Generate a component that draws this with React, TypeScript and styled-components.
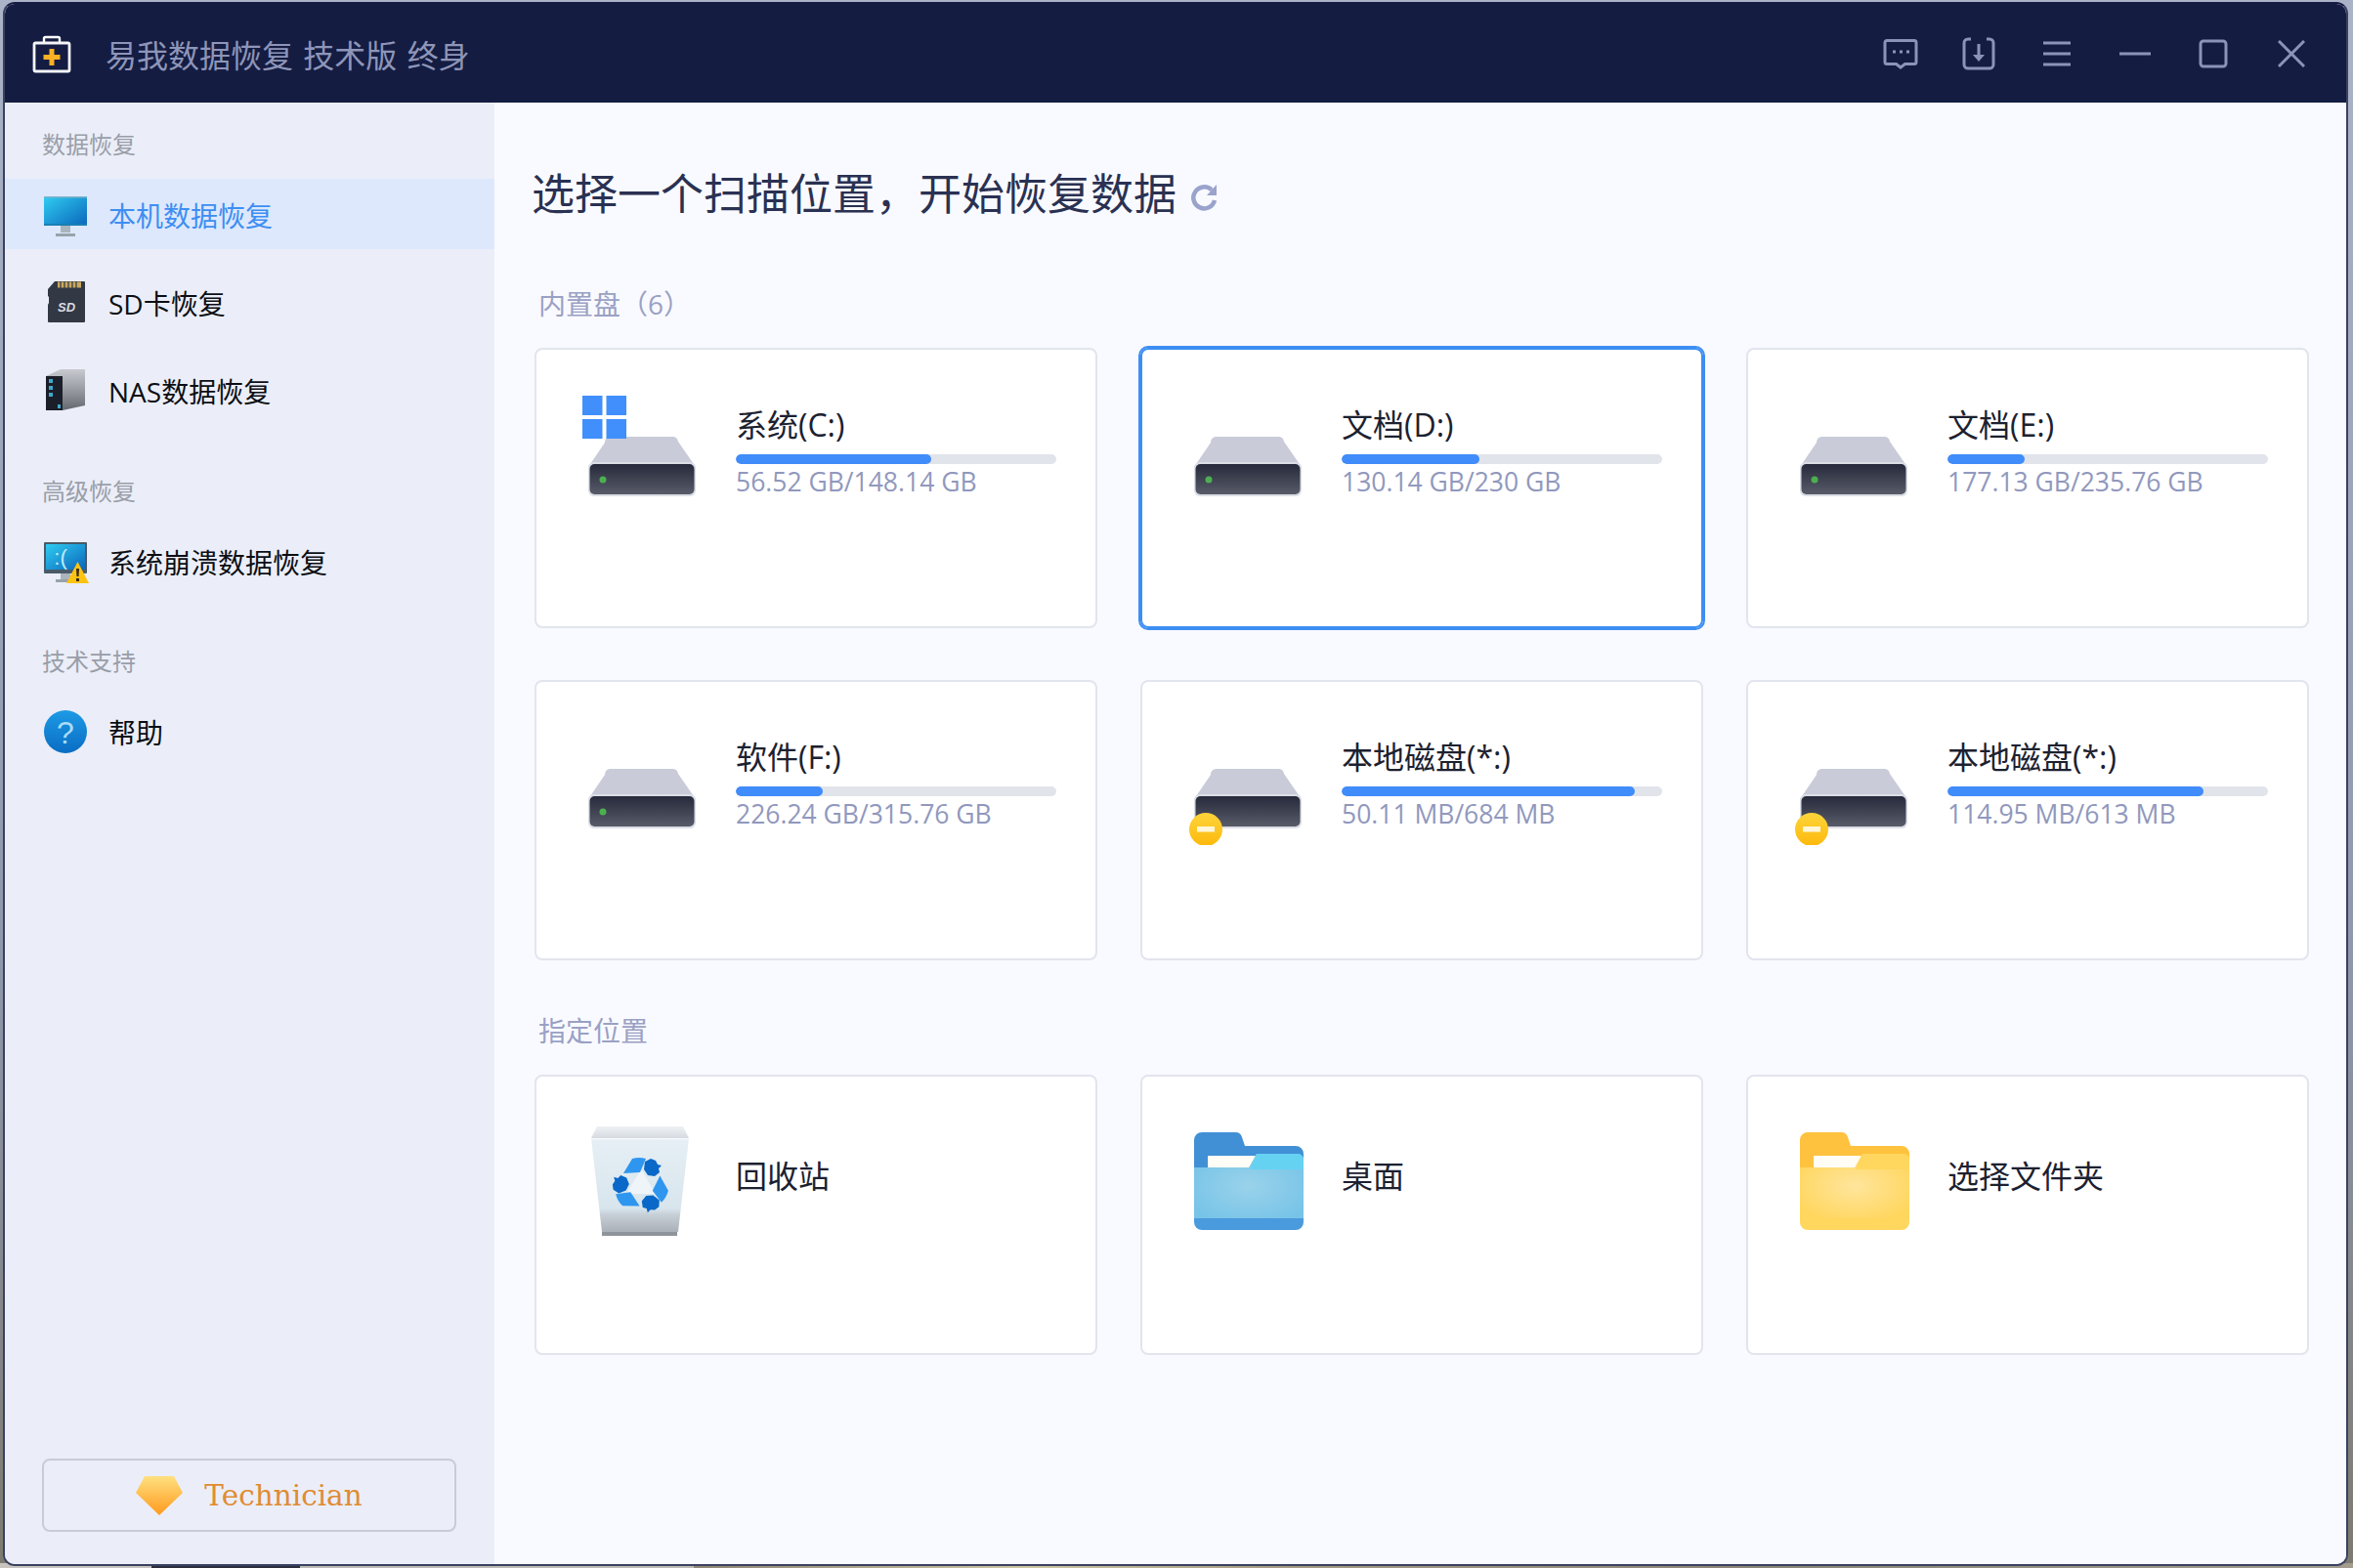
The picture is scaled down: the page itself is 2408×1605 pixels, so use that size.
import React from "react";
import styled, { createGlobalStyle } from "styled-components";

const FONT = `"Open Sans", "Noto Sans CJK SC", sans-serif`;

const GlobalStyle = createGlobalStyle`
  html, body {
    margin: 0;
    padding: 0;
    width: 2408px;
    height: 1605px;
    overflow: hidden;
    font-family: ${FONT};
    background:
      linear-gradient(90deg, #c8c5c0 0, #c8c5c0 155px, #2c2e3e 155px, #2c2e3e 307px, #bdbbb6 307px, #bdbbb6 710px, #8f8574 710px, #cfc7a4 1050px, #a89c84 1300px, #8b8578 1800px, #a39d90 2408px) bottom / 100% 5px no-repeat,
      linear-gradient(180deg, #aab3c7 0%, #8f98ad 60%, #7d7a70 100%);
  }
  * { box-sizing: border-box; }
`;

const Window = styled.div`
  width: 2400px;
  height: 1601px;
  margin: 2px 0 0 3px;
  border: 2px solid #3a4160;
  border-top-color: #141c42;
  border-radius: 12px;
  overflow: hidden;
  display: flex;
  flex-direction: column;
  background: #f9faff;
`;

const TitleBar = styled.header`
  height: 101px;
  flex: none;
  display: flex;
  align-items: center;
  padding: 0 16px 0 27px;
  background: #141c42;
`;

const AppTitle = styled.h1`
  margin: 0 0 0 34px;
  flex: 1;
  font-size: 32px;
  font-weight: 400;
  word-spacing: 2px;
  color: #8e95b8;
  white-space: pre;
`;

const WinButton = styled.button`
  width: 80px;
  height: 80px;
  padding: 0;
  border: 0;
  background: none;
  display: flex;
  align-items: center;
  justify-content: center;
  color: #8b93b8;
`;

const Body = styled.div`
  flex: 1;
  display: flex;
  min-height: 0;
`;

const Sidebar = styled.nav`
  width: 501px;
  flex: none;
  display: flex;
  flex-direction: column;
  padding: 25px 0 33px;
  background: #ebeef8;
`;

const NavGroup = styled.div`
  display: flex;
  flex-direction: column;
  gap: 18px;
  & + & {
    margin-top: 49.5px;
  }
`;

const NavLabel = styled.div`
  height: 35px;
  line-height: 36px;
  padding-left: 38px;
  font-size: 24px;
  color: #9a9ea9;
`;

const NavRow = styled.div<{ $active?: boolean }>`
  height: 72px;
  display: flex;
  align-items: center;
  gap: 19px;
  padding: 2px 0 0 39px;
  font-size: 28px;
  color: ${(p) => (p.$active ? "#3d8ef2" : "#0c0e14")};
  background: ${(p) => (p.$active ? "#dde8fd" : "transparent")};
`;

const TierButton = styled.div`
  margin: auto 0 0 38px;
  width: 424px;
  height: 75px;
  display: flex;
  align-items: center;
  justify-content: center;
  gap: 22px;
  border: 2px solid #c8ccd6;
  border-radius: 8px;
  font-family: "DejaVu Serif", serif;
  font-size: 29.5px;
  color: #e08c32;
`;

const Main = styled.main`
  flex: 1;
  padding: 59px 39px 0 41px;
  background: #f9faff;
`;

const Heading = styled.div`
  display: flex;
  align-items: center;
  gap: 14px;
  height: 64px;
  margin-left: -3px;
  font-size: 44px;
  color: #2a3152;
`;

const RefreshGlyph = styled.svg`
  width: 28px;
  height: 28px;
  margin-top: 12px;
`;

const Section = styled.section`
  margin-top: 63px;
  & + & {
    margin-top: 51.5px;
  }
`;

const SectionLabel = styled.div`
  height: 40px;
  line-height: 40px;
  margin-left: 4px;
  font-size: 28px;
  color: #9aa1c4;
`;

const CardGrid = styled.div`
  margin-top: 25px;
  display: grid;
  grid-template-columns: repeat(3, 576px);
  column-gap: 44px;
  row-gap: 53px;
`;

const Card = styled.div<{ $selected?: boolean }>`
  height: 287px;
  display: flex;
  align-items: flex-start;
  gap: 36px;
  padding: 47px 0 0 44px;
  background: #fff;
  border: 2px solid ${(p) => (p.$selected ? "#3d8ef2" : "#e2e4ee")};
  border-radius: 8px;
  outline: ${(p) => (p.$selected ? "2px solid #3d8ef2" : "none")};
`;

const CardIcon = styled.svg`
  width: 124px;
  height: 120px;
  flex: none;
`;

const CardInfo = styled.div`
  width: 328px;
  margin-top: 10px;
`;

const CardName = styled.div`
  height: 40px;
  line-height: 40px;
  font-size: 32px;
  color: #1c2130;
`;

const Track = styled.div`
  height: 10px;
  margin-top: 10px;
  border-radius: 5px;
  overflow: hidden;
  background: #e1e4ea;
`;

const Fill = styled.div`
  height: 100%;
  border-radius: 5px;
  background: #408cfa;
`;

const Usage = styled.div`
  height: 36px;
  line-height: 36px;
  font-size: 26.5px;
  color: #9198bd;
  white-space: nowrap;
`;

const PlainName = styled(CardName)`
  margin-top: 35px;
`;

const AppIcon = () => (
  <svg width="42" height="42" viewBox="0 0 42 42">
    <path d="M13 10V5.500A1.500 1.500 0 0 1 14.500 4h13A1.500 1.500 0 0 1 29 5.500V10" fill="none" stroke="#fff" strokeWidth="2.4" />
    <rect x="3" y="10" width="36" height="29" rx="1.500" fill="#141c42" stroke="#f4f5f8" strokeWidth="2.8" />
    <path d="M18.500 16h5v6h6v5h-6v6h-5v-6h-6v-5h6z" fill="#fbb024" />
  </svg>
);

const FeedbackIcon = () => (
  <svg width="36" height="32" viewBox="0 0 36 32" fill="none" stroke="currentColor" strokeWidth="3">
    <path d="M4 2.500h28a2 2 0 0 1 2 2v20a2 2 0 0 1-2 2h-9.500L18 30l-4.500-3.500H4a2 2 0 0 1-2-2v-20a2 2 0 0 1 2-2z" />
    <path d="M10 14h3M17 14h3M24 14h3" strokeWidth="3.2" />
  </svg>
);

const ImportIcon = () => (
  <svg width="34" height="34" viewBox="0 0 34 34" fill="none" stroke="currentColor" strokeWidth="3">
    <path d="M9 2H6a4 4 0 0 0-4 4v22a4 4 0 0 0 4 4h22a4 4 0 0 0 4-4V6a4 4 0 0 0-4-4h-3" />
    <path d="M17 7v13" />
    <path d="M11 18h12l-6 7z" fill="currentColor" stroke="none" />
  </svg>
);

const MenuIcon = () => (
  <svg width="30" height="26" viewBox="0 0 30 26" stroke="currentColor" strokeWidth="3">
    <path d="M1 2h28M1 13h28M1 24h28" />
  </svg>
);

const MinIcon = () => (
  <svg width="32" height="4" viewBox="0 0 32 4" stroke="currentColor" strokeWidth="3">
    <path d="M0 2h32" />
  </svg>
);

const MaxIcon = () => (
  <svg width="30" height="30" viewBox="0 0 30 30" fill="none" stroke="currentColor" strokeWidth="3">
    <rect x="2" y="2" width="26" height="26" rx="3" />
  </svg>
);

const CloseIcon = () => (
  <svg width="28" height="28" viewBox="0 0 28 28" stroke="currentColor" strokeWidth="3">
    <path d="M1 1l26 26M27 1L1 27" />
  </svg>
);

const ScreenGradient = ({ id }: { id: string }) => (
  <defs>
    <linearGradient id={id} x1="0" y1="0" x2="1" y2="1">
      <stop offset="0" stopColor="#30cdf2" />
      <stop offset="1" stopColor="#0a66bb" />
    </linearGradient>
  </defs>
);

const MonitorIcon = () => (
  <svg width="48" height="48" viewBox="0 0 48 48">
    <ScreenGradient id="screenA" />
    <path d="M18 35h10v7H18z" fill="#aab4bc" />
    <path d="M13 43h20v3H13z" fill="#98a2aa" />
    <rect x="1" y="5" width="44" height="30" rx="1" fill="url(#screenA)" />
    <path d="M1 5h44v1.500H1z" fill="#7fb2c8" />
    <path d="M1 33h44v2H1z" fill="#1a7fb4" />
  </svg>
);

const SdIcon = () => (
  <svg width="48" height="48" viewBox="0 0 48 48">
    <path d="M12 2h30a1 1 0 0 1 1 1v40a1 1 0 0 1-1 1H6a1 1 0 0 1-1-1V26l1-2v-6l-1-1V10z" fill="#333845" />
    <path d="M15 2.500h24v6H15z" fill="#c9a860" />
    <path d="M18 2v7M22 2v7M26 2v7M30 2v7M34 2v7" stroke="#333845" strokeWidth="1.2" />
    <text x="24" y="33" textAnchor="middle" fontFamily="Liberation Sans, sans-serif" fontSize="13" fontWeight="700" fontStyle="italic" fill="#d9dbe2">SD</text>
  </svg>
);

const NasIcon = () => (
  <svg width="48" height="48" viewBox="0 0 48 48">
    <defs>
      <linearGradient id="nasSide" x1="0" y1="0" x2="0" y2="1">
        <stop offset="0" stopColor="#c8cad0" />
        <stop offset="0.6" stopColor="#8e9198" />
        <stop offset="1" stopColor="#63666d" />
      </linearGradient>
    </defs>
    <path d="M3 9l15-7h25v37l-23 5H3z" fill="url(#nasSide)" />
    <path d="M3 9h17v35H3z" fill="#1b1f2a" />
    <path d="M6 12h4v4H6zM6 19h4v4H6zM6 26h4v4H6zM15 38h3v4h-3z" fill="#3fa9c9" />
  </svg>
);

const CrashIcon = () => (
  <svg width="48" height="48" viewBox="0 0 48 48">
    <ScreenGradient id="screenB" />
    <path d="M18 36h10v6H18z" fill="#aab4bc" />
    <path d="M13 42h20v3H13z" fill="#98a2aa" />
    <rect x="1" y="4" width="44" height="32" rx="1" fill="#4a5a68" />
    <rect x="3" y="6" width="40" height="26" fill="url(#screenB)" />
    <text x="18" y="27" textAnchor="middle" fontFamily="Liberation Sans, sans-serif" fontSize="22" fill="#bfeafa">:(</text>
    <path d="M35.500 24L47 46H24z" fill="#fdc311" />
    <path d="M34 31h3l-.5 8h-2zM34 41h3v3h-3z" fill="#3a2a10" />
  </svg>
);

const HelpIcon = () => (
  <svg width="48" height="48" viewBox="0 0 48 48">
    <defs>
      <linearGradient id="helpFill" x1="0" y1="0" x2="0" y2="1">
        <stop offset="0" stopColor="#1d9ae6" />
        <stop offset="1" stopColor="#0a6dc3" />
      </linearGradient>
    </defs>
    <circle cx="23" cy="24" r="22" fill="url(#helpFill)" />
    <text x="23" y="36" textAnchor="middle" fontFamily="Liberation Sans, sans-serif" fontSize="32" fill="#a9dcf7">?</text>
  </svg>
);

const GemIcon = () => (
  <svg width="48" height="40" viewBox="0 0 48 40">
    <defs>
      <linearGradient id="gemFill" x1="0" y1="0" x2="0" y2="1">
        <stop offset="0" stopColor="#ffe07f" />
        <stop offset="1" stopColor="#ff9a1e" />
      </linearGradient>
    </defs>
    <path d="M9 0h30l9 17-24 23L0 17z" fill="url(#gemFill)" />
  </svg>
);

const RefreshIcon = () => (
  <RefreshGlyph viewBox="0 0 28 28" fill="none" stroke="#9aa3cc" strokeWidth="4.500">
    <path d="M22 6.500A11 11 0 1 0 25 17" />
    <path d="M27 1v11H17z" fill="#9aa3cc" stroke="none" />
  </RefreshGlyph>
);

const DriveIcon = ({ system, warn }: { system?: boolean; warn?: boolean }) => (
  <CardIcon viewBox="0 0 124 120">
    <defs>
      <linearGradient id="driveFace" x1="0" y1="0" x2="0" y2="1">
        <stop offset="0" stopColor="#272a3b" />
        <stop offset="1" stopColor="#585b68" />
      </linearGradient>
      <linearGradient id="badge" x1="0" y1="0" x2="0" y2="1">
        <stop offset="0" stopColor="#fdd43a" />
        <stop offset="1" stopColor="#fdb90c" />
      </linearGradient>
    </defs>
    <path d="M26 48a6 6 0 0 1 5-6h65a6 6 0 0 1 5 5l18 26H9z" fill="#c9ccd8" />
    <rect x="9" y="68" width="110" height="35" rx="6" fill="#dcdee6" />
    <rect x="10.500" y="70" width="107" height="31" rx="5" fill="url(#driveFace)" />
    {!warn && <circle cx="24" cy="86" r="3.500" fill="#4caf50" />}
    {system && (
      <g fill="#408ffc">
        <rect x="3" y="0" width="20.500" height="20" />
        <rect x="27.500" y="0" width="20.500" height="20" />
        <rect x="3" y="24" width="20.500" height="20" />
        <rect x="27.500" y="24" width="20.500" height="20" />
      </g>
    )}
    {warn && (
      <g>
        <circle cx="21" cy="104" r="17" fill="url(#badge)" />
        <rect x="12" y="101" width="18" height="5.500" fill="#fff6d8" />
      </g>
    )}
  </CardIcon>
);

const BinIcon = () => (
  <CardIcon viewBox="0 0 124 120">
    <defs>
      <linearGradient id="binBody" x1="0" y1="0" x2="0" y2="1">
        <stop offset="0" stopColor="#e6eff5" />
        <stop offset="0.75" stopColor="#d8e5ed" />
        <stop offset="0.82" stopColor="#c6ced6" />
        <stop offset="1" stopColor="#aab0b8" />
      </linearGradient>
      <linearGradient id="binLid" x1="0" y1="0" x2="0" y2="1">
        <stop offset="0" stopColor="#eef1f4" />
        <stop offset="1" stopColor="#d6dbe1" />
      </linearGradient>
    </defs>
    <path d="M18 4h88l6 12H12z" fill="url(#binLid)" />
    <path d="M12 16h100l-11 96H23z" fill="url(#binBody)" />
    <path d="M12 16h100v1.500H12z" fill="#f5f9fc" />
    <path d="M23 112h77v4H23z" fill="#8e949c" />
    <path d="M63 48l15 25H48z" fill="#eff4f8" />
    {[0, 120, 240].map((r) => (
      <g key={r} transform={`rotate(${r} 63 64)`}>
        <path d="M45 52l9-15q7-2 14 0l-6 14z" fill="#2f96ef" />
        <path d="M67 40l6-3 5 2 2 4 4 1-3 3 1 4-5 4-7-1-4-6z" fill="#0a68c8" />
      </g>
    ))}
  </CardIcon>
);

const FolderIcon = ({ tone }: { tone: "blue" | "yellow" }) => {
  const c =
    tone === "blue"
      ? { back: "#4190d6", top: "#66d2f2", base: "#78c4e8", glow: "#9ad2ea", band: "#4a9ade" }
      : { back: "#ffc23e", top: "#ffd65e", base: "#ffd65e", glow: "#ffe59c", band: "#ffd65e" };
  return (
    <CardIcon viewBox="0 0 124 120">
      <defs>
        <radialGradient id={`glow-${tone}`} cx="0.5" cy="0.5" r="0.6">
          <stop offset="0" stopColor={c.glow} />
          <stop offset="1" stopColor={c.base} />
        </radialGradient>
      </defs>
      <path d="M9 18a8 8 0 0 1 8-8h34a7 7 0 0 1 7 5l3 9h52a8 8 0 0 1 8 8v20H9z" fill={c.back} />
      <path d="M23 34h50l-6 14H23z" fill="#fffdf5" />
      <path d="M9 46h56l8-14h42a6 6 0 0 1 6 6v60H9z" fill={`url(#glow-${tone})`} />
      <path d="M73 32h42a6 6 0 0 1 6 6v10H66z" fill={c.top} />
      <path d="M9 98h112v4a8 8 0 0 1-8 8H17a8 8 0 0 1-8-8z" fill={c.band} />
    </CardIcon>
  );
};

const disks = [
  { name: "系统(C:)", usage: "56.52 GB/148.14 GB", pct: 61, system: true },
  { name: "文档(D:)", usage: "130.14 GB/230 GB", pct: 43, selected: true },
  { name: "文档(E:)", usage: "177.13 GB/235.76 GB", pct: 24 },
  { name: "软件(F:)", usage: "226.24 GB/315.76 GB", pct: 27 },
  { name: "本地磁盘(*:)", usage: "50.11 MB/684 MB", pct: 91.5, warn: true },
  { name: "本地磁盘(*:)", usage: "114.95 MB/613 MB", pct: 80, warn: true },
];

export default function App() {
  return (
    <>
      <GlobalStyle />
      <Window>
        <TitleBar>
          <AppIcon />
          <AppTitle>易我数据恢复 技术版 终身</AppTitle>
          <WinButton><FeedbackIcon /></WinButton>
          <WinButton><ImportIcon /></WinButton>
          <WinButton><MenuIcon /></WinButton>
          <WinButton><MinIcon /></WinButton>
          <WinButton><MaxIcon /></WinButton>
          <WinButton><CloseIcon /></WinButton>
        </TitleBar>
        <Body>
          <Sidebar>
            <NavGroup>
              <NavLabel>数据恢复</NavLabel>
              <NavRow $active><MonitorIcon />本机数据恢复</NavRow>
              <NavRow><SdIcon />SD卡恢复</NavRow>
              <NavRow><NasIcon />NAS数据恢复</NavRow>
            </NavGroup>
            <NavGroup>
              <NavLabel>高级恢复</NavLabel>
              <NavRow><CrashIcon />系统崩溃数据恢复</NavRow>
            </NavGroup>
            <NavGroup>
              <NavLabel>技术支持</NavLabel>
              <NavRow><HelpIcon />帮助</NavRow>
            </NavGroup>
            <TierButton><GemIcon />Technician</TierButton>
          </Sidebar>
          <Main>
            <Heading>选择一个扫描位置，开始恢复数据<RefreshIcon /></Heading>
            <Section>
              <SectionLabel>内置盘（6）</SectionLabel>
              <CardGrid>
                {disks.map((d, i) => (
                  <Card key={i} $selected={d.selected}>
                    <DriveIcon system={d.system} warn={d.warn} />
                    <CardInfo>
                      <CardName>{d.name}</CardName>
                      <Track><Fill style={{ width: `${d.pct}%` }} /></Track>
                      <Usage>{d.usage}</Usage>
                    </CardInfo>
                  </Card>
                ))}
              </CardGrid>
            </Section>
            <Section>
              <SectionLabel>指定位置</SectionLabel>
              <CardGrid>
                <Card><BinIcon /><PlainName>回收站</PlainName></Card>
                <Card><FolderIcon tone="blue" /><PlainName>桌面</PlainName></Card>
                <Card><FolderIcon tone="yellow" /><PlainName>选择文件夹</PlainName></Card>
              </CardGrid>
            </Section>
          </Main>
        </Body>
      </Window>
    </>
  );
}
